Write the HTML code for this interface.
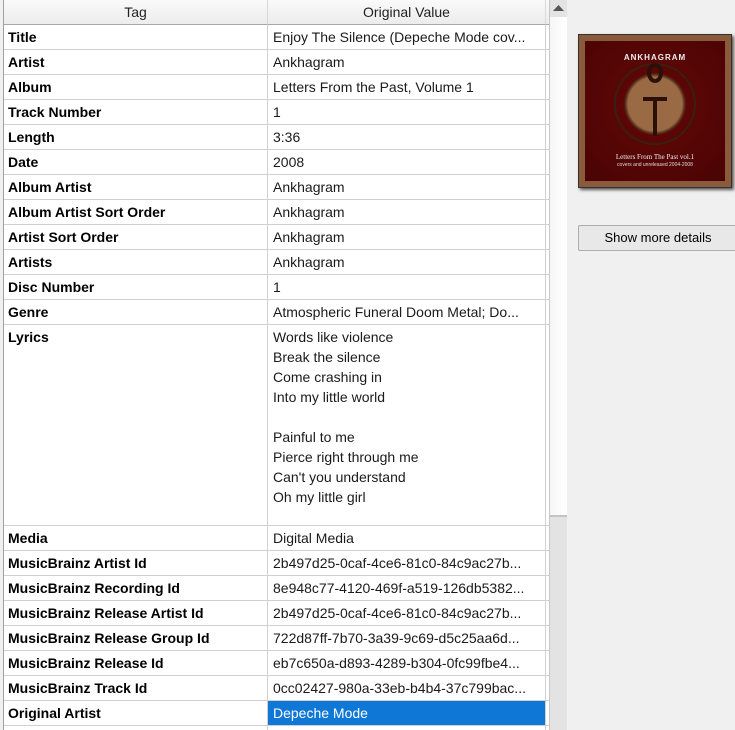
<!DOCTYPE html>
<html><head><meta charset="utf-8"><style>
*{margin:0;padding:0;box-sizing:border-box}
body{width:735px;height:730px;overflow:hidden;background:#f0f0f0;font-family:"Liberation Sans",sans-serif;font-size:14px;color:#000;position:relative}
#tbl{position:absolute;left:3px;top:0;width:546px;height:730px;background:#fff;border-left:1px solid #a0a0a0;overflow:hidden}
.hdr{position:absolute;top:0;height:25px;background:linear-gradient(#fafafa,#ececec);border-bottom:1px solid #a8a8a8;border-right:1px solid #d8d8d8;text-align:center;line-height:25px;color:#222}
.row{position:absolute;left:0;width:546px;border-bottom:1px solid #d0d0d0}
.c1{position:absolute;left:4px;top:0;font-weight:bold;line-height:24px}
.c2{position:absolute;left:269px;top:0;line-height:24px;color:#1a1a1a;white-space:nowrap}
.vl{position:absolute;left:263px;top:25px;width:1px;height:705px;background:#d0d0d0}
.vl2{position:absolute;left:541px;top:25px;width:1px;height:705px;background:#d0d0d0}
#sb{position:absolute;left:549px;top:0;width:18px;height:730px;background:#e3e3e3;border-left:1px solid #c8c8c8}
#thumb{position:absolute;left:0;top:17px;width:17px;height:500px;background:linear-gradient(90deg,#f6f6f6,#fff);border-bottom:2px solid #c4c4c4}
#art{position:absolute;left:578px;top:34px;width:154px;height:154px;background:#8a5a3a;box-shadow:2px 2px 3px #555;border:1px solid #333}
#art .in{position:absolute;left:6px;top:6px;width:140px;height:140px;background:radial-gradient(circle at 50% 45%,#9a6a44 0 26%,#5a3a22 28%,#5c0606 30%,#4a0404 100%)}
#btn{position:absolute;left:578px;top:225px;width:160px;height:26px;border:1px solid #adadad;border-radius:2px;background:#e8e8e8;text-align:center;line-height:24px;font-size:13px}
</style></head><body>
<div id="tbl">
<div class="hdr" style="left:0;width:264px">Tag</div>
<div class="hdr" style="left:264px;width:278px">Original Value</div>
<div class="hdr" style="left:542px;width:6px;border-right:none"></div>
<div class="row" style="top:25px;height:25px"><div class="c1">Title</div><div class="c2">Enjoy The Silence (Depeche Mode cov...</div></div>
<div class="row" style="top:50px;height:25px"><div class="c1">Artist</div><div class="c2">Ankhagram</div></div>
<div class="row" style="top:75px;height:25px"><div class="c1">Album</div><div class="c2">Letters From the Past, Volume 1</div></div>
<div class="row" style="top:100px;height:25px"><div class="c1">Track Number</div><div class="c2">1</div></div>
<div class="row" style="top:125px;height:25px"><div class="c1">Length</div><div class="c2">3:36</div></div>
<div class="row" style="top:150px;height:25px"><div class="c1">Date</div><div class="c2">2008</div></div>
<div class="row" style="top:175px;height:25px"><div class="c1">Album Artist</div><div class="c2">Ankhagram</div></div>
<div class="row" style="top:200px;height:25px"><div class="c1">Album Artist Sort Order</div><div class="c2">Ankhagram</div></div>
<div class="row" style="top:225px;height:25px"><div class="c1">Artist Sort Order</div><div class="c2">Ankhagram</div></div>
<div class="row" style="top:250px;height:25px"><div class="c1">Artists</div><div class="c2">Ankhagram</div></div>
<div class="row" style="top:275px;height:25px"><div class="c1">Disc Number</div><div class="c2">1</div></div>
<div class="row" style="top:300px;height:25px"><div class="c1">Genre</div><div class="c2">Atmospheric Funeral Doom Metal; Do...</div></div>
<div class="row" style="top:325px;height:201px"><div class="c1">Lyrics</div><div class="c2" style="line-height:20px;top:2px">Words like violence<br>Break the silence<br>Come crashing in<br>Into my little world<br><br>Painful to me<br>Pierce right through me<br>Can't you understand<br>Oh my little girl</div></div>
<div class="row" style="top:526px;height:25px"><div class="c1">Media</div><div class="c2">Digital Media</div></div>
<div class="row" style="top:551px;height:25px"><div class="c1">MusicBrainz Artist Id</div><div class="c2">2b497d25-0caf-4ce6-81c0-84c9ac27b...</div></div>
<div class="row" style="top:576px;height:25px"><div class="c1">MusicBrainz Recording Id</div><div class="c2">8e948c77-4120-469f-a519-126db5382...</div></div>
<div class="row" style="top:601px;height:25px"><div class="c1">MusicBrainz Release Artist Id</div><div class="c2">2b497d25-0caf-4ce6-81c0-84c9ac27b...</div></div>
<div class="row" style="top:626px;height:25px"><div class="c1">MusicBrainz Release Group Id</div><div class="c2">722d87ff-7b70-3a39-9c69-d5c25aa6d...</div></div>
<div class="row" style="top:651px;height:25px"><div class="c1">MusicBrainz Release Id</div><div class="c2">eb7c650a-d893-4289-b304-0fc99fbe4...</div></div>
<div class="row" style="top:676px;height:25px"><div class="c1">MusicBrainz Track Id</div><div class="c2">0cc02427-980a-33eb-b4b4-37c799bac...</div></div>
<div class="vl"></div><div class="vl2"></div>
<div class="row" style="top:701px;height:25px"><div class="c1">Original Artist</div><div style="position:absolute;left:264px;top:0;width:277px;height:24px;background:#0f78d7;color:#fff;line-height:24px;padding-left:5px">Depeche Mode</div></div>
</div>
<div id="sb"><div id="thumb"></div>
<svg style="position:absolute;left:3px;top:5px" width="11" height="6"><path d="M0 6 L5.5 0 L11 6Z" fill="#555"/></svg></div>
<div id="art"><div class="in">
<div style="position:absolute;top:12px;width:100%;text-align:center;color:#eee;font-weight:bold;font-size:8px;letter-spacing:1px">ANKHAGRAM</div>
<svg style="position:absolute;left:0;top:0" width="140" height="140"><circle cx="70" cy="63" r="40" fill="none" stroke="#3a2010" stroke-width="2"/><path d="M70 40 a6 8 0 1 1 0.1 0 M70 56 V95 M58 58 H82" stroke="#2a1008" stroke-width="4" fill="none"/></svg>
<div style="position:absolute;top:112px;width:100%;text-align:center;color:#eee;font-size:7px;font-family:'Liberation Serif',serif">Letters From The Past vol.1</div>
<div style="position:absolute;top:121px;width:100%;text-align:center;color:#ddd;font-size:5px">covers and unreleased 2004-2008</div>
</div></div>
<div id="btn">Show more details</div>
</body></html>
